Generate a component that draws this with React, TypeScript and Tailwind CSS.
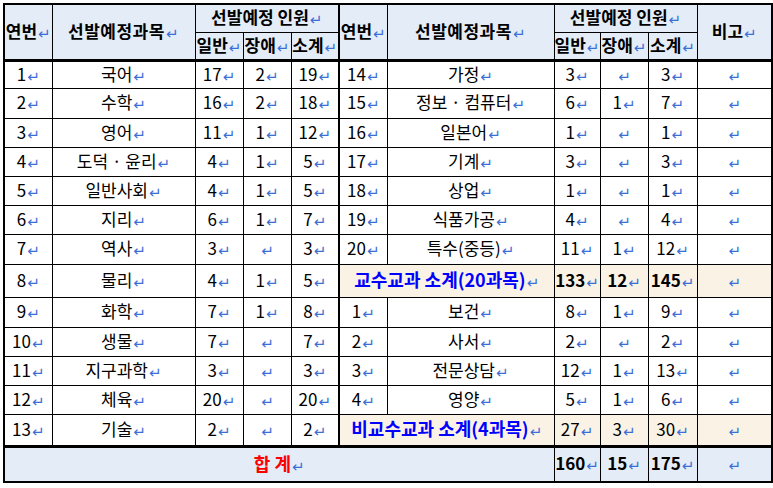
import React from "react";

type Row = [string, string, string, string, string];

const leftRows: Row[] = [
  ["1", "국어", "17", "2", "19"],
  ["2", "수학", "16", "2", "18"],
  ["3", "영어", "11", "1", "12"],
  ["4", "도덕 · 윤리", "4", "1", "5"],
  ["5", "일반사회", "4", "1", "5"],
  ["6", "지리", "6", "1", "7"],
  ["7", "역사", "3", "", "3"],
  ["8", "물리", "4", "1", "5"],
  ["9", "화학", "7", "1", "8"],
  ["10", "생물", "7", "", "7"],
  ["11", "지구과학", "3", "", "3"],
  ["12", "체육", "20", "", "20"],
  ["13", "기술", "2", "", "2"],
];

// objects are the subtotal rows
const rightRows: (Row | { label: string; nums: string[]; bold: boolean })[] = [
  ["14", "가정", "3", "", "3"],
  ["15", "정보 · 컴퓨터", "6", "1", "7"],
  ["16", "일본어", "1", "", "1"],
  ["17", "기계", "3", "", "3"],
  ["18", "상업", "1", "", "1"],
  ["19", "식품가공", "4", "", "4"],
  ["20", "특수(중등)", "11", "1", "12"],
  { label: "교수교과 소계(20과목)", nums: ["133", "12", "145"], bold: true },
  ["1", "보건", "8", "1", "9"],
  ["2", "사서", "2", "", "2"],
  ["3", "전문상담", "12", "1", "13"],
  ["4", "영양", "5", "1", "6"],
  { label: "비교수교과 소계(4과목)", nums: ["27", "3", "30"], bold: false },
];

const heights = [
  "h-[28px]", "h-[30px]", "h-[29px]", "h-[29px]", "h-[29px]", "h-[29px]", "h-[30px]",
  "h-[33px]", "h-[30px]", "h-[29px]", "h-[29px]", "h-[29px]", "h-[32px]",
];

const Mark = () => (
  <span className="text-[15px] text-[#3b6fd6] font-normal align-[-1px] ml-[1px]" style={{ fontFamily: "'DejaVu Sans', sans-serif" }}>
    ↵
  </span>
);

const td = "border border-black p-0 text-center align-middle whitespace-nowrap";
const hb = "border-b-[3px] border-b-double";
const tb = "border-t-[3px] border-t-double";

export default function App() {
  return (
    <div className="pl-[3px] pt-[3px] bg-white w-[773px] h-[488px]" style={{ fontFamily: "'Noto Sans CJK KR', 'Noto Sans', sans-serif" }}>
      <table className="table-fixed border-collapse border-2 border-black w-[768px] text-[17px] leading-none text-black">
        <colgroup>
          <col className="w-[48px]" />
          <col className="w-[143px]" />
          <col className="w-[48px]" />
          <col className="w-[48px]" />
          <col className="w-[48px]" />
          <col className="w-[48px]" />
          <col className="w-[167px]" />
          <col className="w-[46px]" />
          <col className="w-[48px]" />
          <col className="w-[49px]" />
          <col className="w-[75px]" />
        </colgroup>
        <thead className="bg-[#e4ecf7] font-bold">
          <tr className="h-[28px]">
            <td rowSpan={2} className={`${td} ${hb}`}>연번<Mark /></td>
            <td rowSpan={2} className={`${td} ${hb} tracking-[0.5px]`}>선발예정과목<Mark /></td>
            <td colSpan={3} className={`${td} border-r-2`}>선발예정 인원<Mark /></td>
            <td rowSpan={2} className={`${td} ${hb}`}>연번<Mark /></td>
            <td rowSpan={2} className={`${td} ${hb} tracking-[0.5px]`}>선발예정과목<Mark /></td>
            <td colSpan={3} className={td}>선발예정 인원<Mark /></td>
            <td rowSpan={2} className={`${td} ${hb}`}>비고<Mark /></td>
          </tr>
          <tr className="h-[28px]">
            <td className={`${td} ${hb}`}>일반<Mark /></td>
            <td className={`${td} ${hb}`}>장애<Mark /></td>
            <td className={`${td} ${hb} border-r-2`}>소계<Mark /></td>
            <td className={`${td} ${hb}`}>일반<Mark /></td>
            <td className={`${td} ${hb}`}>장애<Mark /></td>
            <td className={`${td} ${hb}`}>소계<Mark /></td>
          </tr>
        </thead>
        <tbody>
          {leftRows.map((l, i) => {
            const r = rightRows[i];
            return (
              <tr key={i} className={heights[i]}>
                <td className={td}>{l[0]}<Mark /></td>
                <td className={td}>{l[1]}<Mark /></td>
                <td className={td}>{l[2]}<Mark /></td>
                <td className={td}>{l[3]}<Mark /></td>
                <td className={`${td} border-r-2`}>{l[4]}<Mark /></td>
                {Array.isArray(r) ? (
                  <>
                    <td className={td}>{r[0]}<Mark /></td>
                    <td className={td}>{r[1]}<Mark /></td>
                    <td className={td}>{r[2]}<Mark /></td>
                    <td className={td}>{r[3]}<Mark /></td>
                    <td className={td}>{r[4]}<Mark /></td>
                    <td className={td}><Mark /></td>
                  </>
                ) : (
                  <>
                    <td colSpan={2} className={`${td} bg-[#fbf2e6] font-bold text-[18px] text-[#0000ff]`}>{r.label}<Mark /></td>
                    {r.nums.map((n, j) => (
                      <td key={j} className={`${td} bg-[#fbf2e6] ${r.bold ? "font-bold" : ""}`}>{n}<Mark /></td>
                    ))}
                    <td className={`${td} bg-[#fbf2e6]`}><Mark /></td>
                  </>
                )}
              </tr>
            );
          })}
          <tr className="h-[36px] bg-[#e4ecf7] font-bold">
            <td colSpan={7} className={`${td} ${tb} text-[#ff0000] text-[18px]`}>합 계<Mark /></td>
            <td className={`${td} ${tb}`}>160<Mark /></td>
            <td className={`${td} ${tb}`}>15<Mark /></td>
            <td className={`${td} ${tb}`}>175<Mark /></td>
            <td className={`${td} ${tb}`}><Mark /></td>
          </tr>
        </tbody>
      </table>
    </div>
  );
}
